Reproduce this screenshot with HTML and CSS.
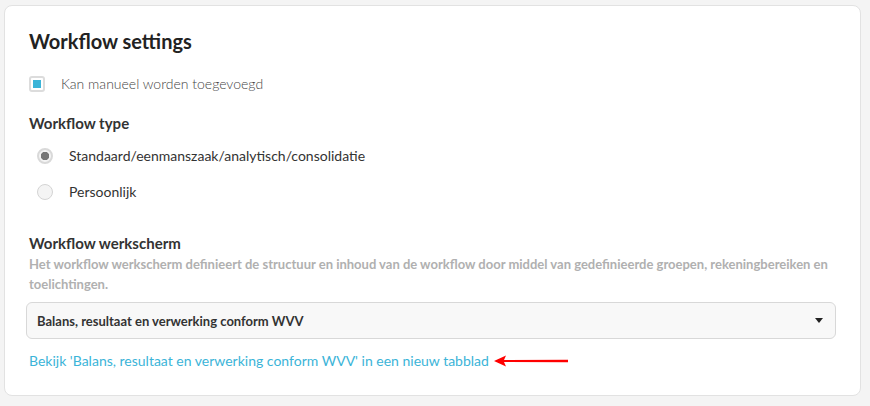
FILE: index.html
```html
<!DOCTYPE html>
<html lang="en">
<head>
    <meta charset="UTF-8">
    <meta name="viewport" content="width=device-width, initial-scale=1.0">
    <title>Workflow settings</title>
    <link rel="stylesheet" href="styles.css">
</head>
<body>
    <div class="card">
        <h1>Workflow settings</h1>
        <label class="check">
            <span class="box"><span class="tick"></span></span>
            Kan manueel worden toegevoegd
        </label>

        <h2>Workflow type</h2>
        <div class="radios">
            <label class="radio">
                <span class="dot checked"></span>
                Standaard/eenmanszaak/analytisch/consolidatie
            </label>
            <label class="radio">
                <span class="dot"></span>
                Persoonlijk
            </label>
        </div>

        <h2 class="screen-title">Workflow werkscherm</h2>
        <p class="help">Het workflow werkscherm definieert de structuur en inhoud van de workflow door middel van gedefinieerde groepen, rekeningbereiken en toelichtingen.</p>

        <div class="select">
            <span>Balans, resultaat en verwerking conform WVV</span>
            <span class="caret"></span>
        </div>

        <div class="link-row">
            <a href="#">Bekijk 'Balans, resultaat en verwerking conform WVV' in een nieuw tabblad</a>
            <svg class="arrow" width="76" height="12" viewBox="0 0 76 12">
                <path d="M0 6 L12 0.5 L10 5 L74 4.8 L74 7.2 L10 7 L12 11.5 Z" fill="#f00"/>
            </svg>
        </div>
    </div>
</body>
</html>
```

FILE: styles.css
```css
body {
    margin: 0;
    padding: 5px 9px 10px 4px;
    font-family: Lato, "Open Sans", sans-serif;
    background-color: #f4f4f4;
    color: #333;
}
.card {
    background-color: #fff;
    border: 1px solid #e2e2e2;
    border-radius: 8px;
    padding: 23px 24px 26px 24px;
    height: 340px;
}
h1 {
    font-size: 20px;
    font-weight: 700;
    margin: 0 0 22px 0;
    color: #222;
}
.check {
    display: flex;
    align-items: center;
    gap: 16px;
    font-size: 14px;
    font-weight: 300;
    color: #444;
}
.box {
    width: 16px;
    height: 16px;
    box-sizing: border-box;
    border: 2px solid #dcdcdc;
    border-radius: 3px;
    display: flex;
    align-items: center;
    justify-content: center;
}
.tick {
    width: 8px;
    height: 8px;
    background-color: #3bb4d8;
}
h2 {
    font-size: 15px;
    font-weight: 700;
    margin: 22px 0 15px 0;
    color: #333;
}
.radios {
    display: flex;
    flex-direction: column;
    gap: 19px;
    padding-left: 8px;
}
.radio {
    display: flex;
    align-items: center;
    gap: 16px;
    font-size: 14px;
    color: #333;
}
.dot {
    width: 16px;
    height: 16px;
    box-sizing: border-box;
    border-radius: 50%;
    border: 1px solid #d4d4d4;
    background-color: #f4f4f4;
}
.dot.checked {
    background: radial-gradient(circle, #777 0 4px, #f4f4f4 4.5px);
    border: 2px solid #d9d9d9;
}
.screen-title {
    margin: 34px 0 3px 0;
}
.help {
    font-size: 13px;
    font-weight: 700;
    color: #b0b0b0;
    line-height: 20px;
    margin: -1px 0 8px 0;
}
.select {
    display: flex;
    align-items: center;
    justify-content: space-between;
    height: 37px;
    box-sizing: border-box;
    margin-left: -3px;
    width: 810px;
    padding: 0 12px 0 10px;
    background-color: #f8f8f8;
    border: 1px solid #d8d8d8;
    border-radius: 6px;
    font-size: 13px;
    font-weight: 700;
    color: #333;
}
.caret {
    width: 0;
    height: 0;
    border-left: 4px solid transparent;
    border-right: 4px solid transparent;
    border-top: 5px solid #222;
}
.link-row {
    display: flex;
    align-items: center;
    gap: 5px;
    margin-top: 13px;
}
.link-row a {
    font-size: 14px;
    color: #3bb4d8;
    text-decoration: none;
}
```
